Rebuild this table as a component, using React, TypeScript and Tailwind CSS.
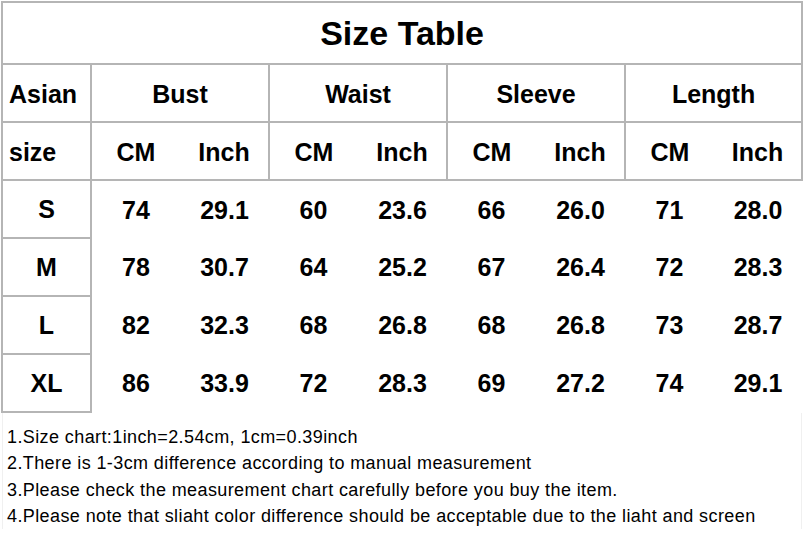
import React from 'react'

const groups = ['Bust', 'Waist', 'Sleeve', 'Length']

const rows: [string, string[]][] = [
  ['S', ['74', '29.1', '60', '23.6', '66', '26.0', '71', '28.0']],
  ['M', ['78', '30.7', '64', '25.2', '67', '26.4', '72', '28.3']],
  ['L', ['82', '32.3', '68', '26.8', '68', '26.8', '73', '28.7']],
  ['XL', ['86', '33.9', '72', '28.3', '69', '27.2', '74', '29.1']],
]

const notes = [
  '1.Size chart:1inch=2.54cm, 1cm=0.39inch',
  '2.There is 1-3cm difference according to manual measurement',
  '3.Please check the measurement chart carefully before you buy the item.',
  '4.Please note that sliaht color difference should be acceptable due to the liaht and screen',
]

const cell = 'border-2 border-[#b5b5b5] p-0'

export default function App() {
  return (
    <div className="w-[804px] h-[540px] bg-white text-black overflow-hidden font-['Liberation_Sans',Arial,sans-serif]">
      <table className="border-collapse table-fixed w-[802px] ml-[1px] mt-[1px]">
        <colgroup>
          <col className="w-[89px]" />
          {Array.from({ length: 7 }).map((_, i) => (
            <col key={i} className="w-[89px]" />
          ))}
          <col className="w-[88px]" />
        </colgroup>
        <tbody>
          <tr className="h-[62px]">
            <td colSpan={9} className={`${cell} text-center text-[34px] font-bold`}>
              Size Table
            </td>
          </tr>
          <tr className="h-[58px]">
            <td className={`${cell} pl-[6px] pt-[3px] text-left text-[25px] font-bold`}>Asian</td>
            {groups.map(g => (
              <td key={g} colSpan={2} className={`${cell} pt-[3px] text-center text-[25px] font-bold`}>
                {g}
              </td>
            ))}
          </tr>
          <tr className="h-[58px]">
            <td className={`${cell} pl-[6px] pt-[3px] text-left text-[25px] font-bold`}>size</td>
            {groups.map(g => (
              <React.Fragment key={g}>
                <td className="border-y-2 border-l-2 border-[#b5b5b5] pt-[3px] text-center text-[25px] font-bold">CM</td>
                <td className="border-y-2 border-r-2 border-[#b5b5b5] pt-[3px] text-center text-[25px] font-bold">Inch</td>
              </React.Fragment>
            ))}
          </tr>
          {rows.map(([size, vals]) => (
            <tr key={size} className="h-[58px]">
              <td className={`${cell} pt-[2px] text-center text-[25px] font-bold`}>{size}</td>
              {vals.map((v, i) => (
                <td key={i} className="pt-[2px] text-center text-[25px] font-bold">
                  {v}
                </td>
              ))}
            </tr>
          ))}
        </tbody>
      </table>

      <div className="mx-[2px] border-x border-[#f0f0f0] pt-[11px] pl-[4px] text-[18px] leading-[26.3px] tracking-[0.4px]">
        {notes.map(n => (
          <div key={n} className="whitespace-nowrap">
            {n}
          </div>
        ))}
      </div>
    </div>
  )
}
